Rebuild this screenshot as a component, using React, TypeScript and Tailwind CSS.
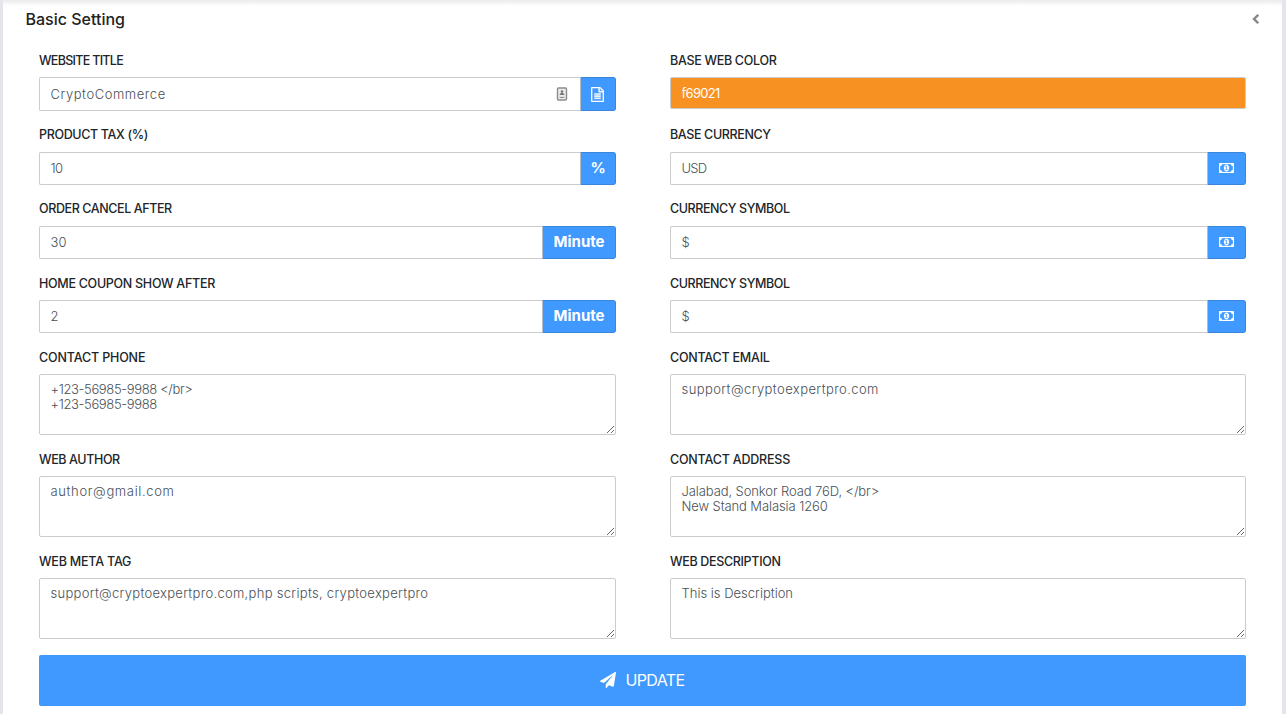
import React from "react";

const FILE =
  "M1468 380q28 28 48 76t20 88v1152q0 40-28 68t-68 28h-1344q-40 0-68-28t-28-68v-1600q0-40 28-68t68-28h896q40 0 88 20t76 48zm-444-244v376h376q-10-29-22-41l-313-313q-12-12-41-22zm384 1528v-1024h-416q-40 0-68-28t-28-68v-416h-768v1536h1280zm-1024-864q0-14 9-23t23-9h704q14 0 23 9t9 23v64q0 14-9 23t-23 9h-704q-14 0-23-9t-9-23v-64zm736 224q14 0 23 9t9 23v64q0 14-9 23t-23 9h-704q-14 0-23-9t-9-23v-64q0-14 9-23t23-9h704zm0 256q14 0 23 9t9 23v64q0 14-9 23t-23 9h-704q-14 0-23-9t-9-23v-64q0-14 9-23t23-9h704z";
const MONEY =
  "M768 1152h384v-96h-128v-448h-114l-148 137 77 80q42-37 55-57h2v288h-128v96zm512-256q0 70-21 142t-59.5 134-101.5 101-138 39-138-39-101.5-101-59.5-134-21-142 21-142 59.5-134 101.5-101 138-39 138 39 101.5 101 59.5 134 21 142zm512 256v-512q-106 0-181-75t-75-181h-1152q0 106-75 181t-181 75v512q106 0 181 75t75 181h1152q0-106 75-181t181-75zm128-832v1152q0 26-19 45t-45 19h-1792q-26 0-45-19t-19-45v-1152q0-26 19-45t45-19h1792q26 0 45 19t19 45z";
const PLANE =
  "M1764 11q33 24 27 64l-256 1536q-5 29-32 45-14 8-31 8-11 0-24-5l-453-185-242 295q-18 23-49 23-13 0-22-4-19-7-30.5-23.5t-11.5-36.5v-349l864-1059-1069 925-395-162q-37-14-40-55-2-40 32-59l1664-960q15-9 32-9 20 0 36 11z";

const FileIcon = () => (
  <svg viewBox="0 0 1536 1792" className="mr-[2px] h-[15px] w-[13px]" fill="currentColor" stroke="currentColor" strokeWidth="50"><path d={FILE} /></svg>
);
const MoneyIcon = () => (
  <svg viewBox="0 256 1920 1280" className="mb-[1px] h-[10px] w-[15px]" fill="currentColor" stroke="currentColor" strokeWidth="40"><path d={MONEY} /></svg>
);
const ContactIcon = () => (
  <svg viewBox="0 0 12 14" className="h-[14px] w-[12px]">
    <rect x="1.5" y="1" width="9" height="12" rx="1" fill="#ececec" stroke="#8c8c8c" strokeWidth="1.4" />
    <circle cx="6" cy="4.6" r="1.3" fill="#777" />
    <path d="M3.6 8c0-2.6 4.8-2.6 4.8 0z" fill="#777" />
    <path d="M3.6 10.4h4.8" stroke="#888" strokeWidth="1" />
  </svg>
);

function Field({ label, ls = "", lead = "leading-[22px]", children }: { label: string; ls?: string; lead?: string; children: React.ReactNode }) {
  return (
    <div>
      <label className={`block h-[27px] text-[12.5px] font-medium whitespace-nowrap text-[#212529] ${lead} ${ls}`}>{label}</label>
      {children}
    </div>
  );
}

function Input({ value, ls = "", addon, addonClass = "", icon, h = "h-[33px]" }: { value: string; ls?: string; addon: React.ReactNode; addonClass?: string; icon?: React.ReactNode; h?: string }) {
  return (
    <div className={`flex ${h}`}>
      <div className="flex min-w-0 flex-1 items-center rounded-l-[2px] border border-r-0 border-[#ccc] bg-white pr-3 pl-[10.5px]">
        <input defaultValue={value} className={`min-w-0 flex-1 bg-transparent text-[13px] font-light text-[#495057] outline-none ${ls}`} />
        {icon}
      </div>
      <div className={`flex shrink-0 items-center justify-center rounded-r-[3px] border border-[#3a86dc] border-l-[#b5bcc6] bg-[#4099ff] text-[15px] font-bold text-white ${addonClass}`}>{addon}</div>
    </div>
  );
}

function Area({ value, ls = "" }: { value: string; ls?: string }) {
  return (
    <textarea
      defaultValue={value}
      className={`block h-[61px] w-full rounded-[2px] border border-[#ccc] bg-white px-[10.5px] pt-[7px] text-[13px] leading-[15px] font-light text-[#495057] outline-none ${ls}`}
    />
  );
}

export default function App() {
  return (
    <div className="flex h-[714px] w-full overflow-hidden bg-[#e4e4eb] pr-1 pl-[3px] font-['Inter','Liberation_Sans',sans-serif]">
      <div className="flex-1 bg-white bg-linear-to-b from-[#ebebeb] to-[#fff] to-[6px]">
        <div className="flex h-[50px] items-start justify-between pt-[8px] pr-[22px] pl-[22.5px]">
          <h5 className="text-[16px] leading-[22px] font-medium text-[#222]">Basic Setting</h5>
          <svg viewBox="0 0 8 10" className="mt-[6px] h-[10px] w-2" fill="none" stroke="#888" strokeWidth="2.4"><path d="M6.3 .8 2 5l4.3 4.2" /></svg>
        </div>
        <div className="grid grid-cols-[577px_576px] grid-rows-[75px_74px_74px_74px_102px_102px_104px] gap-x-[54px] pl-9">
          <Field label="WEBSITE TITLE" ls="tracking-[-0.7px]"><Input h="h-[34px]" value="CryptoCommerce" ls="tracking-[0.55px] pt-[2px]" addon={<FileIcon />} addonClass="w-9" icon={<ContactIcon />} /></Field>
          <Field label="BASE WEB COLOR" ls="tracking-[-0.3px]">
            <input defaultValue="f69021" className="block h-8 w-full rounded-[2px] border border-[#ccc] bg-[#f79122] px-[10.5px] text-[13px] tracking-[-0.7px] text-white outline-none" />
          </Field>
          <Field label="PRODUCT TAX (%)" ls="tracking-[-0.35px]" lead="leading-[20px]"><Input value="10" ls="tracking-[-0.5px]" addon="%" addonClass="w-9 pb-px" /></Field>
          <Field label="BASE CURRENCY" ls="tracking-[-0.37px]" lead="leading-[20px]"><Input value="USD" ls="tracking-[-0.8px]" addon={<MoneyIcon />} addonClass="w-[39px]" /></Field>
          <Field label="ORDER CANCEL AFTER" ls="tracking-[-0.4px]" lead="leading-[20px]"><Input value="30" addon="Minute" addonClass="w-[74px]" /></Field>
          <Field label="CURRENCY SYMBOL" ls="tracking-[-0.42px]" lead="leading-[20px]"><Input value="$" addon={<MoneyIcon />} addonClass="w-[39px]" /></Field>
          <Field label="HOME COUPON SHOW AFTER" ls="tracking-[-0.29px]"><Input value="2" addon="Minute" addonClass="w-[74px]" /></Field>
          <Field label="CURRENCY SYMBOL" ls="tracking-[-0.42px]"><Input value="$" addon={<MoneyIcon />} addonClass="w-[39px]" /></Field>
          <Field label="CONTACT PHONE" ls="tracking-[-0.15px]"><Area ls="tracking-[-0.36px]" value={"+123-56985-9988 </br>\n+123-56985-9988"} /></Field>
          <Field label="CONTACT EMAIL" ls="tracking-[-0.23px]"><Area ls="tracking-[0.42px]" value="support@cryptoexpertpro.com" /></Field>
          <Field label="WEB AUTHOR" ls="tracking-[-0.38px]"><Area ls="tracking-[0.65px]" value="author@gmail.com" /></Field>
          <Field label="CONTACT ADDRESS" ls="tracking-[-0.2px]"><Area ls="tracking-[-0.1px]" value={"Jalabad, Sonkor Road 76D, </br>\nNew Stand Malasia 1260"} /></Field>
          <Field label="WEB META TAG" ls="tracking-[-0.2px]"><Area ls="tracking-[0.3px]" value="support@cryptoexpertpro.com,php scripts, cryptoexpertpro" /></Field>
          <Field label="WEB DESCRIPTION" ls="tracking-[-0.33px]"><Area value="This is Description" /></Field>
        </div>
        <button className="ml-9 flex h-[51px] w-[1207px] items-center justify-center gap-[9px] rounded-[2px] bg-[#4099ff] pb-px text-[16px] text-white">
          <svg viewBox="0 0 1792 1792" className="size-4" fill="currentColor"><path d={PLANE} /></svg>
          <span className="tracking-[-0.6px]">UPDATE</span>
        </button>
      </div>
    </div>
  );
}
